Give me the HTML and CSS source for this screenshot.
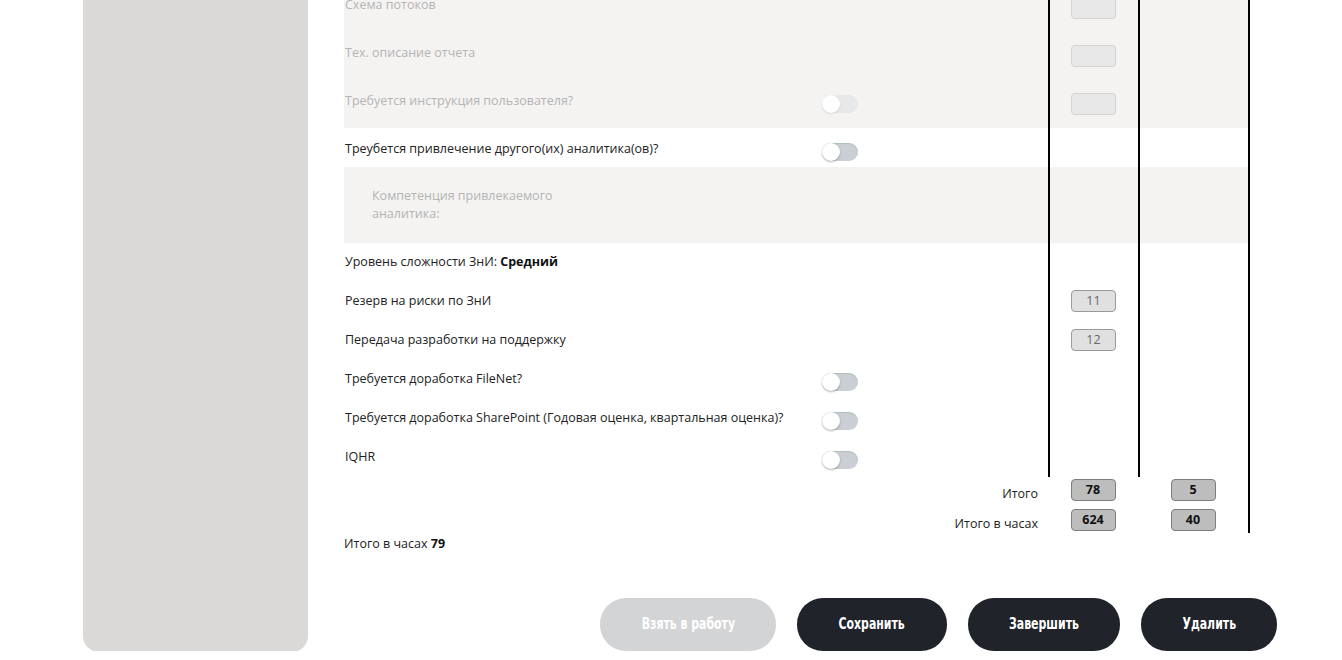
FILE: index.html
```html
<!DOCTYPE html>
<html lang="ru">
<head>
<meta charset="utf-8">
<title>Оценка ЗнИ</title>
<link rel="stylesheet" href="styles.css">
</head>
<body>
<div class="page">
  <aside class="sidebar"></aside>
  <main class="content">
    <section class="table">
      <div class="row row-tall shaded muted">
        <div class="c1"><span class="label">Схема потоков</span></div>
        <div class="c2"><span class="box box-disabled"></span></div>
        <div class="c3"></div>
      </div>
      <div class="row row-tall shaded muted">
        <div class="c1"><span class="label">Тех. описание отчета</span></div>
        <div class="c2"><span class="box box-disabled"></span></div>
        <div class="c3"></div>
      </div>
      <div class="row row-tall shaded muted">
        <div class="c1"><span class="label">Требуется инструкция пользователя?</span><span class="toggle toggle-disabled"></span></div>
        <div class="c2"><span class="box box-disabled"></span></div>
        <div class="c3"></div>
      </div>
      <div class="row row-mid">
        <div class="c1"><span class="label">Треубется привлечение другого(их) аналитика(ов)?</span><span class="toggle"></span></div>
        <div class="c2"></div>
        <div class="c3"></div>
      </div>
      <div class="row row-block shaded muted">
        <div class="c1"><span class="sublabel">Компетенция привлекаемого аналитика:</span></div>
        <div class="c2"></div>
        <div class="c3"></div>
      </div>
      <div class="row">
        <div class="c1"><span class="label">Уровень сложности ЗнИ: <b>Средний</b></span></div>
        <div class="c2"></div>
        <div class="c3"></div>
      </div>
      <div class="row">
        <div class="c1"><span class="label">Резерв на риски по ЗнИ</span></div>
        <div class="c2"><span class="box box-value">11</span></div>
        <div class="c3"></div>
      </div>
      <div class="row">
        <div class="c1"><span class="label">Передача разработки на поддержку</span></div>
        <div class="c2"><span class="box box-value">12</span></div>
        <div class="c3"></div>
      </div>
      <div class="row">
        <div class="c1"><span class="label">Требуется доработка FileNet?</span><span class="toggle"></span></div>
        <div class="c2"></div>
        <div class="c3"></div>
      </div>
      <div class="row">
        <div class="c1"><span class="label">Требуется доработка SharePoint (Годовая оценка, квартальная оценка)?</span><span class="toggle"></span></div>
        <div class="c2"></div>
        <div class="c3"></div>
      </div>
      <div class="row">
        <div class="c1"><span class="label">IQHR</span><span class="toggle"></span></div>
        <div class="c2"></div>
        <div class="c3"></div>
      </div>
      <div class="totals">
        <div class="t1">Итого</div>
        <div class="t2"><span class="box box-total">78</span></div>
        <div class="t3"><span class="box box-total">5</span></div>
      </div>
      <div class="totals totals-last">
        <div class="t1">Итого в часах</div>
        <div class="t2"><span class="box box-total">624</span></div>
        <div class="t3"><span class="box box-total">40</span></div>
      </div>
    </section>
    <p class="hours">Итого в часах <b>79</b></p>
    <div class="actions">
      <button class="btn btn-disabled" type="button"><span class="btn-text">Взять в работу</span></button>
      <button class="btn btn-save" type="button"><span class="btn-text">Сохранить</span></button>
      <button class="btn btn-finish" type="button"><span class="btn-text">Завершить</span></button>
      <button class="btn btn-delete" type="button"><span class="btn-text">Удалить</span></button>
    </div>
  </main>
</div>
</body>
</html>
```
FILE: styles.css
```css
* { box-sizing: border-box; }
html, body { margin: 0; padding: 0; background: #fff; }
body {
  font-family: "Open Sans", "Noto Sans", sans-serif;
  font-size: 12.5px;
  color: #222;
  overflow: hidden;
}
.page {
  display: flex;
  align-items: stretch;
  padding-left: 83px;
  margin-top: -16px;
}
.sidebar {
  width: 225px;
  flex: none;
  background: #dad9d8;
  border-radius: 0 0 16px 16px;
  margin-bottom: -1px;
}
.content {
  margin-left: 36px;
  width: 933px;
  flex: none;
}
.table { width: 906px; }
.row {
  display: grid;
  grid-template-columns: 704px 90px 112px;
  height: 39px;
}
.row.shaded { background: #f4f3f2; }
.row-tall { height: 48px; }
.row-block { height: 76px; }
.c1 {
  display: flex;
  align-items: flex-start;
  padding-left: 1px;
}
.c2 {
  border-left: 2px solid #000;
  display: flex;
  justify-content: center;
  align-items: flex-start;
  padding-top: 8px;
  padding-right: 1px;
}
.c3 {
  border-left: 2px solid #000;
  border-right: 2px solid #000;
}
.label {
  width: 477px;
  flex: none;
  line-height: 16px;
  padding-top: 11px;
}
.row-tall .label, .row-mid .label { padding-top: 13px; }
.row-tall .c2 { padding-top: 13px; }
.muted .label, .muted .sublabel { color: #b4b4b4; }
.sublabel {
  display: block;
  width: 235px;
  padding: 20px 0 0 27px;
  line-height: 18px;
}
b { font-weight: 700; color: #111; }

.toggle {
  position: relative;
  width: 36px;
  height: 18px;
  border-radius: 9px;
  background: #cbcfd5;
  box-shadow: inset 0 1px 1px rgba(90, 150, 90, 0.25);
  margin-top: 13px;
  flex: none;
}
.row-tall .toggle, .row-mid .toggle { margin-top: 15px; }
.toggle::after {
  content: "";
  position: absolute;
  left: 0;
  top: 0;
  width: 18px;
  height: 18px;
  border-radius: 50%;
  background: #fff;
  box-shadow: 0 1px 2px rgba(0, 0, 0, 0.3);
}
.toggle-disabled { background: #e6e8ea; box-shadow: none; }
.toggle-disabled::after { box-shadow: 0 1px 2px rgba(0, 0, 0, 0.12); }

.box {
  display: flex;
  align-items: center;
  justify-content: center;
  width: 45px;
  height: 22px;
  border-radius: 4px;
  font-size: 12.5px;
  line-height: 1;
}
.box-disabled { background: #e8e8e8; border: 1px solid #d3d3d3; }
.box-value { background: #e0e0e0; border: 1px solid #9a9a9a; color: #666; }
.box-total { background: #bdbdbd; border: 1px solid #7e7e7e; color: #111; font-weight: 700; }

.totals {
  display: grid;
  grid-template-columns: 704px 90px 112px;
  height: 30px;
  align-items: start;
}
.totals-last { height: 26px; }
.t1 {
  text-align: right;
  padding-right: 10px;
  line-height: 16px;
  padding-top: 9px;
}
.t2, .t3 {
  display: flex;
  justify-content: center;
  padding-top: 2px;
  height: 100%;
}
.t3 { border-right: 2px solid #000; }

.hours {
  margin: 0;
  padding-top: 3px;
  line-height: 16px;
}
.actions {
  display: flex;
  justify-content: flex-end;
  gap: 21px;
  margin-top: 46px;
}
.btn {
  height: 53px;
  border: none;
  border-radius: 26px;
  color: #fff;
  font-family: "DejaVu Sans Condensed", "Liberation Sans", sans-serif;
  font-weight: 700;
  font-size: 16px;
  background: #20232a;
  padding: 0 0 2px;
}
.btn-text {
  display: inline-block;
  transform: scaleX(0.76);
}
.btn-disabled { width: 176px; background: #d3d4d6; }
.btn-save { width: 150px; }
.btn-finish { width: 152px; }
.btn-delete { width: 136px; }
```
